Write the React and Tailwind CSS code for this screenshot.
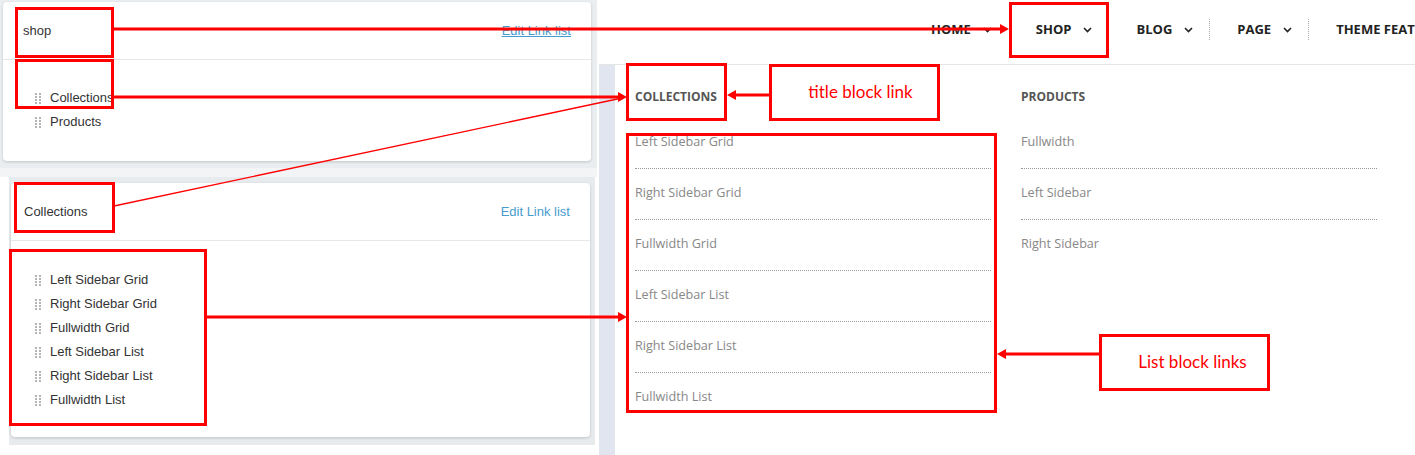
import React from 'react';

const CARD_ONE = ['Collections', 'Products'];
const CARD_TWO = ['Left Sidebar Grid', 'Right Sidebar Grid', 'Fullwidth Grid', 'Left Sidebar List', 'Right Sidebar List', 'Fullwidth List'];
const NAV = ['HOME', 'SHOP', 'BLOG', 'PAGE', 'THEME FEATURES'];
const MENU = [
  { title: 'COLLECTIONS', links: CARD_TWO },
  { title: 'PRODUCTS', links: ['Fullwidth', 'Left Sidebar', 'Right Sidebar'] },
];

function Handle() {
  return (
    <svg width="6" height="11" viewBox="0 0 6 11" className="shrink-0">
      {[0, 3, 6, 9].map((y) => (
        <g key={y} fill="#b4b4b4">
          <rect x="0" y={y} width="2" height="2" />
          <rect x="4" y={y} width="2" height="2" />
        </g>
      ))}
    </svg>
  );
}

function Chevron() {
  return (
    <svg width="9" height="6" viewBox="0 0 9 6" className="ml-[12px] shrink-0">
      <path d="M1 1l3.5 3.5L8 1" fill="none" stroke="#222" strokeWidth="1.6" />
    </svg>
  );
}

function LinkCard({ title, items, underline, head, indent, top }) {
  return (
    <div className="bg-white rounded-[4px] shadow-[0_1px_3px_rgba(0,0,0,0.18)] h-full flex flex-col">
      <div className={`h-[58px] shrink-0 flex items-center justify-between ${head} pr-[20px] border-b border-[#e6e8ea]`}>
        <span className="text-[13px] text-[#333]">{title}</span>
        <span className={`text-[13px] text-[#479ccf] ${underline ? 'underline' : ''}`}>Edit Link list</span>
      </div>
      <ul className={`${top} ${indent}`}>
        {items.map((item) => (
          <li key={item} className="flex items-center gap-[9px] h-[24px] text-[13px] text-[#333]">
            <Handle />
            {item}
          </li>
        ))}
      </ul>
    </div>
  );
}

export default function App() {
  return (
    <div className="relative w-[1415px] h-[455px] overflow-hidden bg-white flex font-['Liberation_Sans',Arial,sans-serif]">
      {/* admin screenshots */}
      <div className="w-[599px] shrink-0 flex flex-col">
        <div className="w-[597px] h-[168px] bg-[#ebeef0] pt-[2px] pl-[3px] pr-[6px] pb-[7px]">
          <LinkCard title="shop" items={CARD_ONE} underline head="pl-[20px]" indent="pl-[32px]" top="pt-[26px]" />
        </div>
        <div className="w-[597px] h-[9px] bg-[#f3f4f6]" />
        <div className="ml-[9px] w-[586px] h-[268px] bg-[#e8ebee] pt-[6px] pl-[2px] pr-[5px] pb-[8px]">
          <LinkCard title="Collections" items={CARD_TWO} head="pl-[13px]" indent="pl-[24px]" top="pt-[27px]" />
        </div>
      </div>

      {/* storefront menu */}
      <div className="flex-1 flex flex-col font-['Open_Sans',sans-serif]">
        <div className="h-[65px] shrink-0 border-b border-[#e5e5e5] flex items-center pl-[304px] pb-[5px] whitespace-nowrap">
          {NAV.map((item, i) => (
            <React.Fragment key={item}>
              {i > 1 && <span className="w-0 h-[21px] border-l border-dotted border-[#aaa]" />}
              <div className={`flex items-center ${i > 1 ? 'pl-[27px]' : 'pl-[28px]'} pr-[16px] text-[13px] font-bold text-[#222]`}>
                {item}
                {i < 4 && <Chevron />}
              </div>
            </React.Fragment>
          ))}
        </div>
        <div className="flex-1 flex">
          <div className="w-[16px] bg-[#e1e5f0]" />
          <div className="flex gap-[30px] pl-[20px] pt-[24px]">
            {MENU.map((col) => (
              <div key={col.title} className="w-[356px]">
                <h3 className="text-[12px] leading-[16px] font-bold text-[#555] mb-[13px]">{col.title}</h3>
                <ul>
                  {col.links.map((link, i) => (
                    <li
                      key={link}
                      className={`pt-[15px] pb-[17px] text-[12.6px] leading-[18px] text-[#888] ${i < col.links.length - 1 ? 'border-b border-dotted border-[#999]' : ''}`}
                    >
                      {link}
                    </li>
                  ))}
                </ul>
              </div>
            ))}
          </div>
        </div>
      </div>

      {/* red annotations */}
      <svg className="absolute inset-0 pointer-events-none" width="1415" height="455">
        <g fill="none" stroke="#ff0000" strokeWidth="3">
          <rect x="16.5" y="8.5" width="96" height="48" />
          <rect x="16.5" y="60.5" width="96" height="47" />
          <rect x="15.5" y="183.5" width="98" height="48" />
          <rect x="10.5" y="250.5" width="195" height="174" />
          <rect x="1010.5" y="3.5" width="97" height="53" />
          <rect x="627.5" y="64.5" width="98" height="55" />
          <rect x="627.5" y="134.5" width="368" height="277" />
          <line x1="114" y1="29" x2="1002" y2="29" />
          <line x1="114" y1="97" x2="620" y2="97" />
          <line x1="207" y1="317" x2="620" y2="317" />
          <line x1="769" y1="95" x2="734" y2="95" />
          <line x1="1100" y1="354" x2="1005" y2="354" />
        </g>
        <line x1="114" y1="206" x2="622" y2="98" stroke="#ff0000" strokeWidth="1.3" />
        <g fill="#ff0000">
          <path d="M1009 29l-9-5v10z" />
          <path d="M627 97l-9-5v10z" />
          <path d="M627 317l-9-5v10z" />
          <path d="M727 95l9-5v10z" />
          <path d="M997 354l9-5v10z" />
        </g>
      </svg>
      <div className="absolute left-[769px] top-[64px] w-[171px] h-[57px] border-[3px] border-[#ff0000] bg-white flex items-center justify-center pl-[12px] pb-[2px] text-[17px] text-[#ff0000] font-['Lato',sans-serif]">
        title block link
      </div>
      <div className="absolute left-[1099px] top-[334px] w-[171px] h-[57px] border-[3px] border-[#ff0000] bg-white flex items-center justify-center pl-[16px] pb-[2px] text-[17px] text-[#ff0000] font-['Lato',sans-serif]">
        List block links
      </div>
    </div>
  );
}
